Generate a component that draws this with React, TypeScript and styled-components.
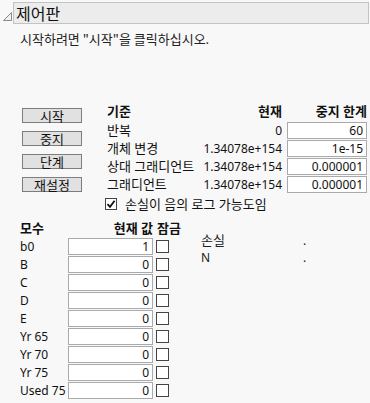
import React from "react";
import styled, { createGlobalStyle } from "styled-components";

const Global = createGlobalStyle`
  html, body { margin: 0; padding: 0; background: #f8f8f8; }
  body {
    font-family: "Noto Sans", "Noto Sans CJK KR", sans-serif;
    font-size: 12px;
    color: #111;
  }
`;

const Page = styled.div`
  width: 370px;
  height: 403px;
  background: #f8f8f8;
  overflow: hidden;
  position: relative;
`;

const HeaderRow = styled.div`
  display: flex;
  align-items: flex-start;
  padding-top: 2px;
`;

const Disclosure = styled.div`
  width: 13px;
  display: flex;
  justify-content: flex-end;
  padding-top: 9px;
`;

const TitleBox = styled.div`
  width: 352px;
  height: 20px;
  border: 1px solid #c3c3c3;
  background: #ececec;
  display: flex;
  align-items: center;
  padding-left: 2px;
  box-sizing: content-box;
  font-family: "Noto Sans CJK KR", sans-serif;
  font-size: 16px;
  color: #111;
  line-height: 20px;
`;

const Subtitle = styled.div`
  margin: 7px 0 0 20px;
  font-family: "Noto Sans CJK KR", sans-serif;
  font-size: 13px;
  line-height: 15px;
  color: #222;
`;

const ControlBlock = styled.div`
  display: flex;
  margin-top: 56px;
  padding-left: 22px;
`;

const ButtonCol = styled.div`
  display: flex;
  flex-direction: column;
  gap: 8px;
  width: 60px;
  flex: none;
  padding-top: 6px;
  margin-right: 25px;
`;

const Button = styled.div`
  height: 13px;
  border: 1px solid #7d7d7d;
  background: #e1e1e1;
  display: flex;
  align-items: center;
  justify-content: center;
  font-family: "Noto Sans CJK KR", sans-serif;
  font-size: 13px;
  line-height: 13px;
  color: #111;
`;

const RightCol = styled.div`
  display: flex;
  flex-direction: column;
  width: 260px;
  flex: none;
`;

const CritGrid = styled.div`
  display: grid;
  grid-template-columns: minmax(0, 1fr) 90px 80px;
  column-gap: 5px;
  grid-auto-rows: 18px;
  grid-template-rows: 19px;
  align-items: center;
`;

const HeadCell = styled.div<{ $align?: string; $pad?: number }>`
  font-weight: bold;
  font-size: 13px;
  text-align: ${(p) => p.$align || "left"};
  padding-left: ${(p) => p.$pad || 0}px;
  white-space: nowrap;
  line-height: 15px;
`;

const Cell = styled.div<{ $align?: string; $ko?: boolean }>`
  text-align: ${(p) => p.$align || "left"};
  font-size: ${(p) => (p.$ko ? 13 : 12)}px;
  white-space: nowrap;
  line-height: 15px;
`;

const NumBox = styled.div`
  height: 15px;
  border: 1px solid #aaaaaa;
  background: #fff;
  text-align: right;
  padding-right: 3px;
  line-height: 15px;
  white-space: nowrap;
  overflow: hidden;
`;

const CheckRow = styled.div`
  display: flex;
  align-items: center;
  gap: 8px;
  margin-top: 4px;
  margin-left: -2px;
  height: 14px;
`;

const CheckBox = styled.div<{ $size: number }>`
  width: ${(p) => p.$size - 2}px;
  height: ${(p) => p.$size - 2}px;
  border: 1px solid #444;
  background: #fff;
  display: flex;
  align-items: center;
  justify-content: center;
`;

const ParamBlock = styled.div`
  display: flex;
  margin-top: 9px;
  padding-left: 20px;
`;

const ParamGrid = styled.div`
  display: grid;
  grid-template-columns: 48px 85px 30px;
  grid-template-rows: 17px;
  grid-auto-rows: 18px;
  align-items: center;
  width: 163px;
`;

const LockCell = styled.div`
  padding-left: 3px;
  display: flex;
  align-items: center;
`;

const LossPanel = styled.div`
  display: grid;
  grid-template-columns: 102px auto;
  grid-auto-rows: 17px;
  align-items: center;
  margin-left: 18px;
  margin-top: 12px;
  align-self: flex-start;
`;

const LossLabel = styled.div<{ $ko?: boolean }>`
  line-height: 15px;
  font-size: ${(p) => (p.$ko ? 13 : 12)}px;
  color: #222;
`;

const Dot = styled.div`
  line-height: 15px;
  color: #223;
`;

const crit = [
  { label: "반복", cur: "0", lim: "60" },
  { label: "개체 변경", cur: "1.34078e+154", lim: "1e-15" },
  { label: "상대 그래디언트", cur: "1.34078e+154", lim: "0.000001" },
  { label: "그래디언트", cur: "1.34078e+154", lim: "0.000001" },
];

const params = [
  ["b0", "1"],
  ["B", "0"],
  ["C", "0"],
  ["D", "0"],
  ["E", "0"],
  ["Yr 65", "0"],
  ["Yr 70", "0"],
  ["Yr 75", "0"],
  ["Used 75", "0"],
];

export default function App() {
  return (
    <Page>
      <Global />
      <HeaderRow>
        <Disclosure>
          <svg width="11" height="11" viewBox="0 0 11 11">
            <polygon points="9.5,1.5 9.5,9.5 1.5,9.5" fill="#f0f0f0" stroke="#8a8a8a" strokeWidth="1" />
          </svg>
        </Disclosure>
        <TitleBox>제어판</TitleBox>
      </HeaderRow>
      <Subtitle>시작하려면 "시작"을 클릭하십시오.</Subtitle>
      <ControlBlock>
        <ButtonCol>
          <Button>시작</Button>
          <Button>중지</Button>
          <Button>단계</Button>
          <Button>재설정</Button>
        </ButtonCol>
        <RightCol>
          <CritGrid>
            <HeadCell>기준</HeadCell>
            <HeadCell $align="right">현재</HeadCell>
            <HeadCell $align="right">중지 한계</HeadCell>
            {crit.map((r) => (
              <React.Fragment key={r.label}>
                <Cell $ko>{r.label}</Cell>
                <Cell $align="right">{r.cur}</Cell>
                <NumBox>{r.lim}</NumBox>
              </React.Fragment>
            ))}
          </CritGrid>
          <CheckRow>
            <CheckBox $size={12}>
              <svg width="10" height="10" viewBox="0 0 10 10">
                <path d="M1.5 5.2 L4 7.8 L8.6 1.8" fill="none" stroke="#111" strokeWidth="1.8" />
              </svg>
            </CheckBox>
            <Cell $ko>손실이 음의 로그 가능도임</Cell>
          </CheckRow>
        </RightCol>
      </ControlBlock>
      <ParamBlock>
        <ParamGrid>
          <HeadCell>모수</HeadCell>
          <HeadCell $align="right">현재 값</HeadCell>
          <HeadCell $pad={4}>잠금</HeadCell>
          {params.map(([n, v]) => (
            <React.Fragment key={n}>
              <Cell>{n}</Cell>
              <NumBox>{v}</NumBox>
              <LockCell>
                <CheckBox $size={13} />
              </LockCell>
            </React.Fragment>
          ))}
        </ParamGrid>
        <LossPanel>
          <LossLabel $ko>손실</LossLabel>
          <Dot>.</Dot>
          <LossLabel>N</LossLabel>
          <Dot>.</Dot>
        </LossPanel>
      </ParamBlock>
    </Page>
  );
}
